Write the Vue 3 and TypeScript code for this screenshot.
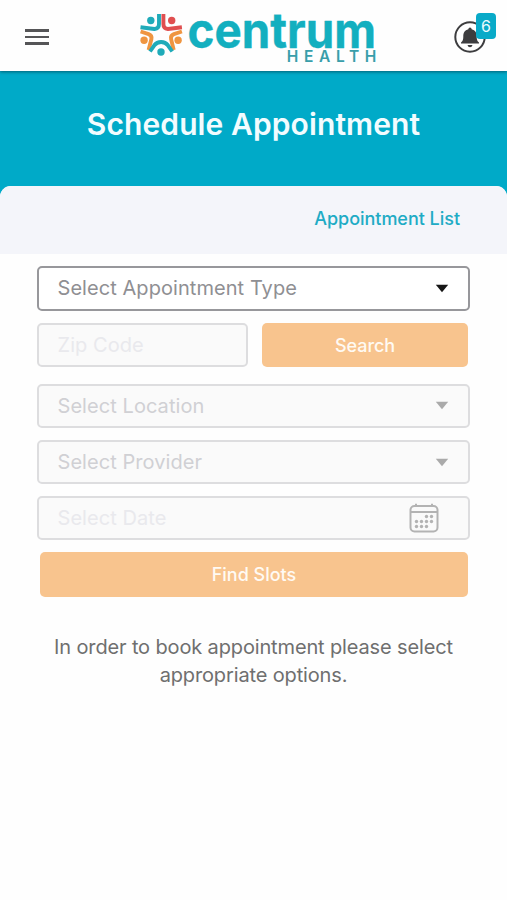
<script setup lang="ts">
import { ref } from 'vue'

const notifications = ref<number>(6)
const zip = ref<string>('')
const dots: [number, number][] = [
  [17.5, 13.5], [22.5, 13.5],
  [7.5, 18.5], [12.5, 18.5], [17.5, 18.5], [22.5, 18.5],
  [7.5, 23.5], [12.5, 23.5], [17.5, 23.5],
]
</script>

<template>
  <div class="screen">
    <header class="topbar">
      <button class="menu" aria-label="Menu"><span></span><span></span><span></span></button>
      <svg class="logo" width="244" height="70" viewBox="138 0 244 70" role="img">
        <g fill="none" stroke-width="3.900" stroke-linejoin="round">
          <path stroke="#1fabb9" d="M159 14v10q0 4.500-4.500 5L140.500 27.300" />
          <path stroke="#e04f50" d="M163.400 14v10q0 4.500 4.500 5L181.900 27.300" />
          <path stroke="#ef9540" d="M140.600 31.500l8 2.600q3.600 1.400 2.800 5L148.600 50" />
          <path stroke="#ef9540" d="M181.900 31.500l-8 2.600q-3.600 1.400-2.800 5L173.700 50" />
          <path stroke="#1fabb9" d="M150 51.500l4.300-6.200q2.500-3.300 6.800-3.300t6.800 3.300l4.300 6.200" />
        </g>
        <circle cx="150.800" cy="20.500" r="3.700" fill="#1fabb9" />
        <circle cx="171.700" cy="20.500" r="3.700" fill="#e04f50" />
        <circle cx="144.100" cy="40.300" r="3.700" fill="#ef9540" />
        <circle cx="178.100" cy="40.300" r="3.700" fill="#ef9540" />
        <circle cx="161" cy="52" r="3.700" fill="#1fabb9" />
        <text class="brand" x="187.600" y="48" textLength="188.500" lengthAdjust="spacingAndGlyphs">centrum</text>
        <text class="sub" x="286.800" y="62.300" textLength="89.500" lengthAdjust="spacing">HEALTH</text>
      </svg>
      <button class="bell" aria-label="Notifications">
        <svg width="32" height="32" viewBox="0 0 32 32">
          <circle cx="16" cy="16" r="14.700" fill="#fff" stroke="#3d3d3f" stroke-width="2" />
          <path fill="#3d3d3f" d="M16 6.500q1.500 0 1.700 1.700c3.600.8 5 3.500 5 7 0 3.800.7 4.800 2.300 6.300v1H7v-1c1.600-1.500 2.300-2.500 2.300-6.300 0-3.500 1.400-6.200 5-7Q14.500 6.500 16 6.500zM13.500 24h5q-.5 2.200-2.500 2.200T13.500 24z" />
        </svg>
        <span class="badge">{{ notifications }}</span>
      </button>
    </header>

    <section class="hero"><h1>Schedule Appointment</h1></section>

    <main class="sheet">
      <nav class="tabs"><a>Appointment List</a></nav>
      <form class="form" @submit.prevent>
        <div class="field active">
          <span>Select Appointment Type</span>
          <svg class="caret" width="14" height="9" viewBox="0 0 14 9"><path d="M.8.800h12.400L7 8.300z" /></svg>
        </div>
        <div class="row">
          <input v-model="zip" class="field zip" placeholder="Zip Code" disabled />
          <button class="btn search" disabled>Search</button>
        </div>
        <div class="field">
          <span>Select Location</span>
          <svg class="caret" width="14" height="9" viewBox="0 0 14 9"><path d="M.8.800h12.400L7 8.300z" /></svg>
        </div>
        <div class="field">
          <span>Select Provider</span>
          <svg class="caret" width="14" height="9" viewBox="0 0 14 9"><path d="M.8.800h12.400L7 8.300z" /></svg>
        </div>
        <div class="field date">
          <span>Select Date</span>
          <svg class="calendar" width="30" height="30" viewBox="0 0 30 30">
            <g fill="none" stroke="#b3b3b3" stroke-width="2">
              <rect x="1.500" y="3" width="27" height="25.500" rx="4" />
              <path d="M1.500 9h27M7 .8v2.500M23 .8v2.500" />
            </g>
            <circle v-for="([x, y], i) in dots" :key="i" :cx="x" :cy="y" r="1.700" fill="#b3b3b3" />
          </svg>
        </div>
        <button class="btn find" disabled>Find Slots</button>
      </form>
      <p class="hint">In order to book appointment please select appropriate options.</p>
    </main>
  </div>
</template>

<style>
body { margin: 0; background: #fff; }
</style>

<style scoped>
.screen { width: 507px; height: 900px; overflow: hidden; background: #fefefe; font-family: Inter, sans-serif; box-sizing: border-box; }
button { border: 0; background: none; padding: 0; font-family: inherit; }
.topbar { height: 71px; display: flex; align-items: flex-start; box-sizing: border-box; padding: 0 11px 0 25px; background: #fefefe; position: relative; box-shadow: 0 1px 3px rgba(0, 50, 65, .6); }
.menu { width: 24px; display: flex; flex-direction: column; gap: 4px; padding-top: 29px; }
.menu span { height: 2.600px; background: #555557; }
.logo { margin-left: 89px; flex: none; overflow: visible; }
.brand { font: 700 49px Inter, sans-serif; fill: #13afbf; stroke: #13afbf; stroke-width: .4; stroke-linejoin: round; }
.sub { font: 600 15.500px Inter, sans-serif; fill: #399eaa; }
.bell { position: relative; width: 32px; height: 32px; margin: 21px 0 0 72px; }
.bell svg { display: block; }
.badge { position: absolute; left: 22px; top: -8px; width: 20px; height: 26px; border-radius: 4px; background: #09aac8; color: #e9fbff; font-size: 16px; line-height: 26px; text-align: center; }
.hero { height: 114.500px; background: #00aac8; padding-bottom: 12px; margin-bottom: -12px; }
.hero h1 { margin: 0; padding-top: 34px; text-align: center; font-size: 30px; line-height: 38px; font-weight: 600; letter-spacing: .1px; color: #f2fcff; }
.sheet { position: relative; background: #fefefe; border-radius: 11px 11px 0 0; overflow: hidden; }
.tabs { height: 68.500px; box-sizing: border-box; background: #f4f5fa; display: flex; justify-content: flex-end; padding: 21px 47px 0 0; }
.tabs a { font-size: 18px; line-height: 24px; font-weight: 500; letter-spacing: -.03px; color: #20abc5; }
.form { padding: 12.400px 37px 0; display: flex; flex-direction: column; gap: 12px; }
.field { height: 44.200px; box-sizing: border-box; border: 2px solid #dddddf; border-radius: 5px; background: #fafafa; padding: 0 19px 0 18.500px; display: flex; align-items: center; justify-content: space-between; font: 400 20px/28px Inter, sans-serif; letter-spacing: .06px; color: #d0d0d4; }
.field.active { border-color: #97979b; background: #fff; color: #8f8f93; }
.caret { fill: #aaa; }
.active .caret { fill: #161616; }
.row { display: flex; gap: 14px; margin-bottom: 5px; }
.zip { width: 211px; }
.zip::placeholder { color: #e9e9ed; opacity: 1; }
.btn { height: 44.200px; padding-top: 1px; border-radius: 5px; background: #f8c48e; color: #fffaf3; font-size: 18px; font-weight: 500; text-align: center; }
.search { width: 206px; letter-spacing: -.1px; }
.date { color: #e9e9ed; padding-right: 29px; }
.find { margin: 0 2px 0 3px; }
.hint { margin: 36px 50px 0; text-align: center; font-size: 20px; line-height: 28px; letter-spacing: -.14px; color: #6f6f6f; }
</style>
